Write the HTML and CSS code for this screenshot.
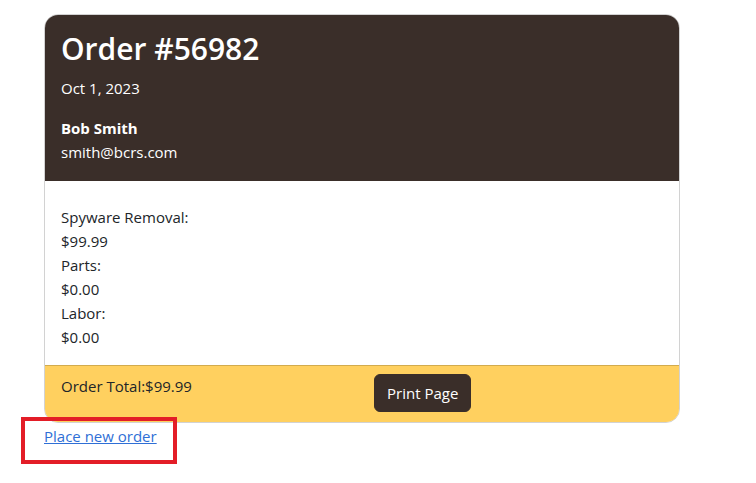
FILE: index.html
```html
<!DOCTYPE html>
<html>
<head>
<meta charset="utf-8">
<link rel="stylesheet" href="styles.css">
</head>
<body>
<div class="page">
  <div class="card">
    <div class="card-header">
      <h1 class="title">Order #56982</h1>
      <p class="date">Oct 1, 2023</p>
      <div class="name">Bob Smith</div>
      <div class="email">smith@bcrs.com</div>
    </div>
    <div class="card-body">
      <div>Spyware Removal:</div>
      <div>$99.99</div>
      <div>Parts:</div>
      <div>$0.00</div>
      <div>Labor:</div>
      <div>$0.00</div>
    </div>
    <div class="card-footer">
      <div class="col">Order Total:$99.99</div>
      <div class="col"><button class="btn">Print Page</button></div>
    </div>
  </div>
  <div class="link-wrap">
    <a href="#" class="link">Place new order</a>
    <span class="highlight"></span>
  </div>
</div>
</body>
</html>
```
FILE: styles.css
```css
html, body {
  margin: 0;
  padding: 0;
  background: #fff;
}
body {
  min-height: 100vh;
  font-family: "Open Sans", "Noto Sans", sans-serif;
  font-size: 15px;
  line-height: 24px;
  color: #212529;
}
.page {
  padding: 14px 0 0 44px;
  width: 636px;
}
.card {
  border: 1px solid rgba(0,0,0,0.175);
  border-radius: 14px;
  overflow: hidden;
}
.card-header {
  background: #3a2e29;
  color: #fff;
  padding: 15px 16px 17px;
}
.title {
  margin: 0 0 8px;
  font-size: 30px;
  line-height: 38px;
  font-weight: 600;
}
.date {
  margin: 0 0 16px;
}
.name {
  font-weight: 700;
}
.card-body {
  background: #fff;
  padding: 24px 16px 16px;
}
.card-footer {
  background: #ffd05f;
  border-top: 1px solid rgba(0,0,0,0.175);
  padding: 8px 4px 10px;
  display: flex;
}
.col {
  flex: 1 1 0;
  padding: 0 12px;
}
.btn {
  font-family: inherit;
  font-size: 15px;
  line-height: 24px;
  color: #fff;
  background: #3a2e29;
  border: 1px solid #3a2e29;
  border-radius: 6px;
  padding: 6px 12px;
  cursor: pointer;
}
.link-wrap {
  position: relative;
  padding-top: 1px;
}
.link {
  color: #2f6fd6;
  text-decoration: underline;
}
.highlight {
  position: absolute;
  display: block;
  left: -23px;
  top: -6px;
  width: 148px;
  height: 39px;
  border: 4px solid #e31d27;
}
```
